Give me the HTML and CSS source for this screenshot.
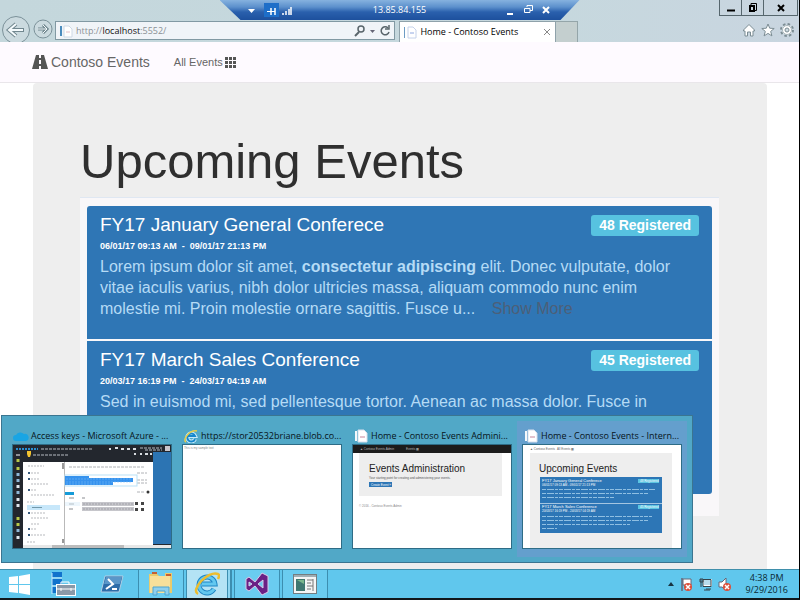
FILE: index.html
```html
<!DOCTYPE html>
<html lang="en">
<head>
<meta charset="utf-8">
<title>Home - Contoso Events</title>
<link rel="stylesheet" href="styles.css">
</head>
<body>
<div class="desktop">
  <header class="browser">
    <div class="window-controls">
      <button aria-label="Minimize"><svg width="10" height="12"><path d="M1 8.500h8" stroke="#000" stroke-width="2"/></svg></button>
      <button aria-label="Restore"><svg width="10" height="12" fill="none" stroke="#000"><path d="M3 3V1.500h5.500v7H7"/><rect x="2" y="4" width="4" height="5" stroke-width="2"/></svg></button>
      <button class="wide" aria-label="Close"><svg width="10" height="12" stroke="#000" stroke-width="2"><path d="M2 3l6 6M8 3L2 9"/></svg></button>
    </div>
    <div class="toolbar">
      <button class="round back" aria-label="Back"><svg width="30" height="28" viewBox="0 0 30 28"><circle cx="15" cy="14" r="13.500" fill="#cbdadf" stroke="#7b9199"/><path d="M9 14h14M15 8l-7 6 7 6" fill="none" stroke="#71878f" stroke-width="4"/><path d="M9 14h13M15 8l-7 6 7 6" fill="none" stroke="#f4fafc" stroke-width="2"/></svg></button>
      <button class="round" aria-label="Forward"><svg width="20" height="20" viewBox="0 0 20 20"><circle cx="10" cy="10" r="9" fill="#cbdadf" stroke="#7b9199"/><path d="M5 10h9M10 6l4 4-4 4" fill="none" stroke="#71878f" stroke-width="3"/><path d="M5 10h9M10 6l4 4-4 4" fill="none" stroke="#f4fafc"/></svg></button>
      <form class="address">
        <svg width="14" height="14"><path d="M1 2h2v10H1z" fill="#4b8cbd"/><path d="M5 2h5l3 3v8H5z" fill="#fff" stroke="#ced9e5"/><path d="M7 8h4" stroke="#e3bdc4"/></svg>
        <div class="url" role="textbox" aria-label="Address" tabindex="0">http://<b>localhost</b>:5552/</div>
        <button type="button" aria-label="Search"><svg width="12" height="12" fill="none" stroke="#59656b"><circle cx="7" cy="4" r="3" stroke-width="1.500"/><path d="M5 7l-4 4" stroke-width="2"/></svg></button>
        <button type="button" aria-label="Search options"><svg width="7" height="12"><path d="M1 5h5L3.500 8z" fill="#667"/></svg></button>
        <button type="button" aria-label="Refresh"><svg width="12" height="12" fill="none" stroke="#59656b" stroke-width="1.500"><path d="M9 3a4 4 0 1 0 1 4"/><path d="M10 0v4H6"/></svg></button>
      </form>
      <div class="tab">
        <svg width="14" height="14"><path d="M1 2h1v11H1z" fill="#6d9cc4"/><path d="M5 2h5l3 3v8H5z" fill="#fff" stroke="#c5d2ea"/><path d="M7 8h4" stroke="#8fa8e0"/></svg>
        <span class="tab-title">Home - Contoso Events</span>
        <button aria-label="Close tab"><svg width="8" height="8" stroke="#888"><path d="M1 1l6 6M7 1L1 7"/></svg></button>
      </div>
      <button class="new-tab" aria-label="New tab"></button>
      <div class="tools">
        <button aria-label="Home"><svg width="14" height="14" fill="#fff" stroke="#7b8c93"><path d="M1.500 7L7 1.500 12.500 7v1H11v5H8.500V9h-3v4H3V8H1.500z"/></svg></button>
        <button aria-label="Favorites"><svg width="14" height="14" fill="#fff" stroke="#7b8c93"><path d="M7 1l1.700 4.200 4.500.300-3.500 2.900 1.200 4.500L7 10.400l-3.900 2.500 1.200-4.500L.800 5.500l4.500-.300z"/></svg></button>
        <button aria-label="Tools"><svg width="14" height="14" fill="none"><circle cx="7" cy="7" r="5.500" stroke="#7b8c93" stroke-width="3" stroke-dasharray="2.300 2"/><circle cx="7" cy="7" r="4" fill="#fff" stroke="#fff" stroke-width="2"/><circle cx="7" cy="7" r="4.500" stroke="#a7b5ba"/><circle cx="7" cy="7" r="2" fill="#cfdce2" stroke="#7b8c93"/></svg></button>
      </div>
    </div>
  </header>

  <div class="remote-bar">
    <svg width="60" height="14" viewBox="0 0 60 14"><path d="M8 6h7l-3.500 4z" fill="#fff"/><rect x="24" width="15" height="14" fill="#1e6ec8"/><path d="M27 8.500h4M31 8.500h4" stroke="#fff"/><path d="M31 5v7M35 5v7" stroke="#fff" stroke-width="1.500"/><path d="M43 10v2M46 8v4M49 6v6M51 4v8" stroke="#fff" stroke-width="1.500"/></svg>
    <span>13.85.84.155</span>
    <svg width="60" height="14" viewBox="0 0 60 14" fill="none" stroke="#fff"><path d="M8 11h6M44 4l6 6M50 4l-6 6" stroke-width="2"/><path d="M28 4V2.500h5.500v5H31M25.500 5.500H31v4h-5.500z"/></svg>
  </div>

  <main class="page">
    <nav class="navbar">
      <a class="brand" href="#"><svg width="16" height="14" viewBox="0 0 16 14"><path d="M4 0h3v3h2V0h3l4 14H9v-3H7v3H0zM7 5v4h2V5z" fill="#555" fill-rule="evenodd"/></svg>Contoso Events</a>
      <a class="link" href="#">All Events <svg width="11" height="11" fill="#555"><path d="M0 0h3v3H0zM4 0h3v3H4zM8 0h3v3H8zM0 4h3v3H0zM4 4h3v3H4zM8 4h3v3H8zM0 8h3v3H0zM4 8h3v3H4zM8 8h3v3H8z"/></svg></a>
    </nav>
    <section class="jumbotron">
      <h1>Upcoming Events</h1>
      <div class="panel">
        <article class="event">
          <div class="event-head"><h2>FY17 January General Conferece</h2><span class="badge">48 Registered</span></div>
          <div class="dates">06/01/17 09:13 AM &nbsp;-&nbsp; 09/01/17 21:13 PM</div>
          <p>Lorem ipsum dolor sit amet, <b>consectetur adipiscing</b> elit. Donec vulputate, dolor vitae iaculis varius, nibh dolor ultricies massa, aliquam commodo nunc enim molestie mi. Proin molestie ornare sagittis. Fusce u... <a href="#">Show More</a></p>
        </article>
        <article class="event tall">
          <div class="event-head"><h2>FY17 March Sales Conference</h2><span class="badge">45 Registered</span></div>
          <div class="dates">20/03/17 16:19 PM &nbsp;-&nbsp; 24/03/17 04:19 AM</div>
          <p>Sed in euismod mi, sed pellentesque tortor. Aenean ac massa dolor. Fusce in</p>
        </article>
      </div>
    </section>
  </main>

  <div class="previews">
    <figure>
      <figcaption><svg width="16" height="14"><path d="M3 12a3 3 0 0 1 0-6 5 5 0 0 1 8-1 3.500 3.500 0 0 1 2 7z" fill="#19a5e4"/></svg><span>Access keys - Microsoft Azure - ...</span></figcaption>
      <svg class="thumb" viewBox="0 0 158 103">
        <rect width="158" height="103" fill="#23272e"/>
        <rect x="140" y="7" width="18" height="92" fill="#2c74b3"/>
        <rect x="10" y="17" width="130" height="86" fill="#fff"/><rect x="10" y="100" width="148" height="3" fill="#e7e7e7"/><rect x="39" y="100" width="72" height="3" fill="#bcbcbc"/>
        <path d="M3 4h22" stroke="#2b8fd0" stroke-width="2" stroke-dasharray="2 1"/>
        <path d="M28 4h52M20 10h36M127 3h22M132 5h17" stroke="#b7bcc2" stroke-dasharray="3 1"/>
        <path d="M96 4h2M102 3h3M108 4h3M114 4h3M120 4h3M121 9h2M127 9h2M132 9h3M137 9h2" stroke="#d9dde2" stroke-width="2"/>
        <path d="M14 6h4v3l-1 3h-2l-1-3z" fill="#f4c32f"/><rect x="152" y="1" width="5" height="5" fill="#c9c6cc"/>
        <path d="M3 10h4" stroke="#fff"/>
        <path d="M5 14v3M5 22v3M5 72v3M5 78v3" stroke="#b8c94a" stroke-width="3"/>
        <path d="M5 28v3M5 34v3M5 46v3M5 84v3" stroke="#8fb8d8" stroke-width="3"/>
        <path d="M5 40v3M5 53v3M5 59v3M5 91v3" stroke="#e0e7ed" stroke-width="3"/>
        <path d="M15 21h16M18 28h9M18 34h9M18 39h17M18 45h6M18 50h24M14 57h7M18 68h14M18 73h18M18 79h9M18 84h6M18 90h15M14 97h9" stroke="#b7b9bd" stroke-dasharray="2 1"/>
        <path d="M15 28h2M15 34h2M15 45h2M15 68h2M15 84h2M15 90h2" stroke="#36597b" stroke-width="2"/>
        <rect x="14" y="60" width="33" height="5" fill="#c7e7fa"/><path d="M19 62.500h10" stroke="#7298aa"/>
        <path d="M51.500 17v86" stroke="#b9b9b9"/><path d="M49 18h2v6h-2zM49 94h2v4h-2z" fill="#999"/>
        <path d="M56 22h76M124 28h10M124 35h10M124 38h10M124 47h8" stroke="#b0b2b6" stroke-dasharray="3 1"/>
        <rect x="52" y="30" width="72" height="11" fill="none" stroke="#b9e1f7"/>
        <path d="M52 31h24v2h44v4h-20v3H52z" fill="#3692ee"/><path d="M53 34h65M53 37h65M53 39h45" stroke="#7cbdf7" stroke-width=".500" stroke-dasharray="2 1"/>
        <rect x="52" y="47" width="9" height="3" fill="#159bd8"/><circle cx="135" cy="47" r="1.500" fill="#333"/>
        <path d="M56 53h5M69 53h3M56 59h5M56 64h4" stroke="#8a8d92"/><path d="M52 59h15" stroke="#dceffa" stroke-width="4" opacity=".5"/>
        <path d="M69 59h52M69 64h52" stroke="#c6c6cb" stroke-width="4"/><path d="M70 59h50M70 64h50" stroke="#a1a1a8" stroke-dasharray="2 1"/>
        <path d="M122 57h3v3h-3zM122 63h3v3h-3zM128 57h3v3h-3zM128 63h3v3h-3z" fill="#444"/>
      </svg>
    </figure>
    <figure>
      <figcaption><svg width="16" height="14"><path d="M12 10a4 4 0 1 1 0-3H5" fill="none" stroke="#c9ecfa" stroke-width="4"/><path d="M12 10a4 4 0 1 1 0-3H5" fill="none" stroke="#1787cc" stroke-width="2"/><path d="M3 13C-1 11 7 0 14 2" fill="none" stroke="#e9cf4a" stroke-width="1.500"/></svg><span>https://stor20532briane.blob.co...</span></figcaption>
      <svg class="thumb" viewBox="0 0 158 103"><rect width="158" height="103" fill="#fff"/><text x="1" y="4" font-size="3" fill="#888">This is my sample text</text></svg>
    </figure>
    <figure>
      <figcaption><svg width="16" height="14"><path d="M2 2h2v10H2z" fill="#f4f8fb"/><path d="M5 1h6l3 3v9H5z" fill="#fff" stroke="#d6dfec"/><path d="M7 8h5" stroke="#e2c2cd" stroke-width="2"/></svg><span>Home - Contoso Events Admini...</span></figcaption>
      <svg class="thumb" viewBox="0 0 158 103"><rect width="158" height="103" fill="#fff"/><rect width="158" height="8" fill="#1c1c1c"/><text x="7" y="5" font-size="3" fill="#b9b9b9">▲ Contoso Events Admin</text><text x="53" y="5" font-size="3" fill="#b9b9b9">Events ▦</text><rect x="6" y="8" width="143" height="43" fill="#eee"/><text x="16" y="27" font-size="10" fill="#222">Events Administration</text><text x="16" y="34" font-size="3" fill="#555">Your starting point for creating and administering your events.</text><rect x="16" y="37" width="23" height="5" fill="#2d76b6"/><text x="18" y="41" font-size="3" fill="#fff">Create Event »</text><text x="6" y="62" font-size="3" fill="#888">© 2016 - Contoso Events Admin</text></svg>
    </figure>
    <figure class="active">
      <figcaption><svg width="16" height="14"><path d="M2 2h2v10H2z" fill="#f4f8fb"/><path d="M5 1h6l3 3v9H5z" fill="#fff" stroke="#d6dfec"/><path d="M7 8h5" stroke="#e2c2cd" stroke-width="2"/></svg><span>Home - Contoso Events - Intern...</span></figcaption>
      <svg class="thumb" viewBox="0 0 158 103"><rect width="158" height="103" fill="#fff"/><text x="7" y="5" font-size="3" fill="#666">▲ Contoso Events</text><text x="34" y="5" font-size="3" fill="#666">All Events ▦</text><rect x="7" y="8" width="142" height="95" fill="#eee"/><text x="16" y="27" font-size="10" fill="#222">Upcoming Events</text><rect x="17" y="32" width="122" height="56" fill="#2d76b6"/><path d="M17 58.500h122" stroke="#d8e8f4" stroke-width=".700"/><rect x="115" y="34" width="21" height="4" fill="#5bc5e2"/><rect x="115" y="60" width="21" height="4" fill="#5bc5e2"/><g fill="#fff" font-size="3"><text x="117" y="37">48 Registered</text><text x="117" y="63">45 Registered</text><text x="19" y="37" font-size="4">FY17 January General Conferece</text><text x="19" y="41">06/01/17 09:13 AM - 09/01/17 21:13 PM</text><text x="19" y="63" font-size="4">FY17 March Sales Conference</text><text x="19" y="67">20/03/17 16:19 PM - 24/03/17 04:19 AM</text></g><g stroke="#8fbfe2" stroke-dasharray="4 1 7 1 3 1"><path d="M19 44.500h113M19 48.500h107M19 52.500h73M19 71.500h110M19 75.500h106M19 79.500h88M19 83.500h15"/></g></svg>
    </figure>
  </div>

  <footer class="taskbar">
    <button class="task" aria-label="Start"><svg width="22" height="22" fill="#fff"><path d="M0 4l9-1v8H0zM10 3l11-2v10H10zM0 12h9v8l-9-1zM10 12h11v10l-11-2z"/></svg></button>
    <button class="task" aria-label="Server Manager"><svg width="26" height="24"><path d="M1 0h10v5H1zM1 7h10v6H1zM1 15h5v6H1z" fill="#1173cc"/><path d="M1 6h10M1 14h10M1 1v21" stroke="#c6e6fa"/><path d="M10 13v-3h8v3" fill="none" stroke="#fff"/><rect x="5.500" y="12.500" width="19" height="11" fill="#8a99a8" stroke="#fff"/><path d="M6 17h18M10 16v3M20 16v3" stroke="#fff"/></svg></button>
    <button class="task" aria-label="PowerShell"><svg width="24" height="20"><path d="M5 2h18l-4 16H1z" fill="#2d6ca8" stroke="#b0d0e6"/><path d="M6 3h16l-2 7H4z" fill="#5a96c8"/><path d="M8 5l5 5-7 5M12 15h5" fill="none" stroke="#fff" stroke-width="2"/></svg></button>
    <button class="task open" aria-label="File Explorer"><svg width="26" height="24"><path d="M1 2h8l2 2h6V1h7v20H1z" fill="#eacb6c"/><path d="M2 4h20v17H2z" fill="#f8e09a"/><path d="M4 1h5M18 3h5" stroke="#c55f34" stroke-width="2"/><path d="M5 23v-8h16v8h-4v-4H9v4z" fill="#8fd0ee" stroke="#4fa5cf"/></svg></button>
    <button class="task open stack" aria-label="Internet Explorer"><span class="front"><svg width="26" height="24"><path d="M20 17a8 8 0 1 1 1-5H8" fill="none" stroke="#1f86c4" stroke-width="5"/><path d="M20 17a8 8 0 1 1 1-5H8" fill="none" stroke="#62c8f0" stroke-width="3"/><path d="M4 22C-4 18 14-2 24 2c2 1 1 3 0 5" fill="none" stroke="#edbd2f" stroke-width="2.500"/></svg></span><span class="sheet"></span></button>
    <button class="task open" aria-label="Visual Studio"><svg width="26" height="24"><path d="M2 7l3-2 6 5L18 1l6 3v16l-6 3-7-9-6 5-3-2zM5 10v4l3-2zM19 8l-5 4 5 4z" fill="#6a2085" fill-rule="evenodd" stroke="#d9cbe8"/></svg></button>
    <button class="task open" aria-label="Application"><svg width="24" height="20"><rect x=".500" y=".500" width="23" height="19" fill="#f4f5f5" stroke="#747d80"/><path d="M1 2h22" stroke="#9faeb5" stroke-width="2"/><rect x="3" y="5" width="9" height="12" fill="#3f7770"/><path d="M4 6h7v4z" fill="#7ab68c"/><path d="M14 6h6M14 9h4M14 12h6M14 15h4M20 5v12" stroke="#777"/></svg></button>
    <div class="tray">
      <svg width="8" height="6"><path d="M1 5h6L4 1z" fill="#173442"/></svg>
      <svg width="14" height="15"><path d="M2 1v13" stroke="#667" stroke-width="1.500"/><path d="M3 2h8v6H3z" fill="#fff" stroke="#667"/><circle cx="8" cy="10" r="4" fill="#dc4f3a"/><path d="M6 8l4 4M10 8l-4 4" stroke="#fff" stroke-width="1.500"/></svg>
      <svg width="14" height="15" fill="#b8dcec" stroke="#36434b"><rect x="4.500" y="2.500" width="8" height="6" stroke="#fff"/><path d="M4 9.500h8v-7H4zM7 12h5M2 2v8M1 2h3v3H1zM5 13h6" fill="none"/></svg>
      <svg width="14" height="15"><path d="M1 5h3l4-4v12l-4-3H1z" fill="#fff" stroke="#667"/><circle cx="9" cy="10" r="4" fill="#dc4f3a"/><path d="M7 8l4 4M11 8l-4 4" stroke="#fff" stroke-width="1.500"/></svg>
      <div class="clock">4:38 PM<br>9/29/2016</div>
    </div>
  </footer>
</div>
</body>
</html>
```
FILE: styles.css
```css
* { box-sizing: border-box; }
body { margin: 0; font-family: "Liberation Sans", Arial, sans-serif; }
button { padding: 0; border: 0; background: none; display: flex; align-items: center; justify-content: center; }
svg { display: block; flex: none; }
a { color: inherit; text-decoration: none; }

.desktop { position: relative; height: 100vh; display: flex; flex-direction: column; overflow: hidden; background: #fff; border-right: 1px solid #000; border-bottom: 2px solid #10171b; }

.browser { flex: none; background: linear-gradient(90deg, #c4d7dc, #c6d8de 70%, #c9d5e0); }
.window-controls { display: flex; justify-content: flex-end; padding-right: 1px; height: 16px; }
.window-controls button { width: 22px; border: solid #56666d; border-width: 0 0 1px 1px; }
.window-controls .wide { width: 35px; border-right-width: 1px; }
.toolbar { display: flex; align-items: flex-end; height: 26px; }
.round { width: 24px; height: 26px; overflow: hidden; }
.round.back { width: 31px; align-items: flex-start; }
.address { flex: 342; margin: 0 4px 2px 0; height: 19px; display: flex; align-items: center; gap: 3px; padding: 0 3px; background: #f0f4f8; border: 1px solid #8199a3; }
.url { flex: 1; font: 9px/16px "Open Sans", sans-serif; color: #8b9196; }
.url b { font-weight: 400; color: #111; }
.tab { flex: 152; height: 21px; display: flex; align-items: center; gap: 3px; padding: 0 4px 0 3px; background: #fff; border: solid #8fa2aa; border-width: 1px 1px 0; }
.tab-title { flex: 1; font: 9px/18px "Open Sans", sans-serif; color: #000; white-space: nowrap; }
.new-tab { width: 22px; height: 21px; background: #c4cfcf; border: 1px solid #94a5a9; border-width: 1px 1px 0 0; }
.tools { flex: 222; display: flex; justify-content: flex-end; gap: 5px; padding: 0 5px 5px 0; }

.remote-bar { position: absolute; top: 0; left: 50%; width: 360px; height: 20px; transform: translateX(-50%); clip-path: polygon(0 0, 100% 0, 341px 100%, 21px 100%); display: flex; align-items: center; justify-content: space-between; padding: 0 20px; background: linear-gradient(#86b2df 0, #5c90cc 35%, #2a60ad 60%, #1d509d); color: #fff; font: 9px/18px "Open Sans", sans-serif; }

.page { flex: 1; min-height: 0; overflow: hidden; display: flex; flex-direction: column; }
.navbar { flex: none; height: 41px; display: flex; align-items: center; gap: 24px; padding: 0 32px; background: #fefaff; border-bottom: 1px solid #e9e6ea; color: #666; }
.brand { display: flex; align-items: center; gap: 3px; font-size: 14px; }
.link { display: flex; align-items: center; gap: 2px; font-size: 11px; }
.jumbotron { flex: 1 0 auto; margin: 0 32px 0 33px; padding: 49px 48px 51px 47px; background: #eee; border-radius: 4px 4px 0 0; }
h1 { margin: 0; height: 65px; font-size: 49px; line-height: 58px; font-weight: 400; color: #2f2f2f; }
.panel { padding: 8px 7px 22px; background: #f9f7f9; display: flex; flex-direction: column; gap: 2px; border-top: 1px solid #dfe7f2; }
.event { padding: 8px 13px 20px; background: #2f76b5; color: #fff; }
.event:first-child { border-radius: 3px 3px 0 0; }
.event.tall { min-height: 153px; border-radius: 0 0 3px 3px; }
.event-head { display: flex; justify-content: space-between; align-items: center; height: 22px; }
h2 { margin: 0; font-size: 19px; line-height: 22px; font-weight: 400; }
.badge { padding: 0 8px; border-radius: 3px; background: #57c2e0; font-size: 14px; line-height: 21px; font-weight: 700; }
.dates { font-size: 9px; line-height: 20px; font-weight: 700; }
.event p { margin: 0; font-size: 16px; line-height: 21px; color: #b5dbf5; }
.event p a { margin-left: 12px; color: #4c5f78; }

.previews { position: absolute; left: 1px; bottom: 35px; display: flex; padding: 5px; background: #51a8c7; border: 1px solid #3b7590; }
figure { margin: 0; padding: 6px 5px 8px; }
figure.active { background: #649fcd; }
figcaption { display: flex; align-items: center; height: 17px; gap: 2px; padding-left: 1px; font: 9px/16px "Open Sans", sans-serif; color: #07141a; white-space: nowrap; }
.thumb { width: 160px; height: 105px; border: 1px solid #2e6c86; }

.taskbar { flex: none; height: 29px; display: flex; background: #60c7ed; border-top: 1px solid #3f8fab; }
.task { width: 48px; }
.task:first-child { width: 40px; }
.task.open { width: 46px; margin-left: 2px; border: solid #3c8eb0; border-width: 0 1px; background: #6accf0; }
.task.stack { align-items: stretch; justify-content: flex-start; }
.front { flex: 1; display: flex; align-items: center; justify-content: center; background: #b4e3f5; border-right: 1px solid #3c8eb0; }
.sheet { width: 3px; background: #8fd6f1; border-right: 1px solid #3c8eb0; }
.tray { margin-left: auto; display: flex; align-items: center; gap: 5px; padding-right: 11px; }
.clock { margin-left: 8px; text-align: center; font: 9px/12px "Open Sans", sans-serif; color: #0b2732; }
```
